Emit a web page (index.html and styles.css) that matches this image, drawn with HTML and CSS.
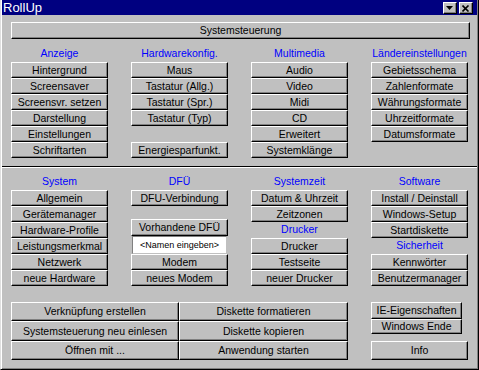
FILE: index.html
```html
<!DOCTYPE html>
<html lang="de">
<head>
  <meta charset="UTF-8" />
  <title>RollUp</title>
  <link rel="stylesheet" href="styles.css">
</head>
<body>

<div class="window">
  <div class="titlebar">
    <span class="title-text">RollUp</span>
    <button class="tbtn" title="Aufrollen">
      <svg width="8" height="5" viewBox="0 0 8 5"><path d="M0 0h7L3.5 4z" fill="#000"/></svg>
    </button>
    <button class="tbtn" title="Schließen">
      <svg width="8" height="7" viewBox="0 0 8 7"><path d="M0.5 0.5l6 6M6.5 0.5l-6 6" stroke="#000" stroke-width="1.6"/></svg>
    </button>
  </div>

  <div class="panel top">
    <button class="btn wide">Systemsteuerung</button>
    <div class="grid">
      <div class="col">
        <div class="label">Anzeige</div>
        <button class="btn">Hintergrund</button>
        <button class="btn">Screensaver</button>
        <button class="btn">Screensvr. setzen</button>
        <button class="btn">Darstellung</button>
        <button class="btn">Einstellungen</button>
        <button class="btn">Schriftarten</button>
      </div>
      <div class="col">
        <div class="label">Hardwarekonfig.</div>
        <button class="btn">Maus</button>
        <button class="btn">Tastatur (Allg.)</button>
        <button class="btn">Tastatur (Spr.)</button>
        <button class="btn">Tastatur (Typ)</button>
        <div class="spacer"></div>
        <button class="btn">Energiesparfunkt.</button>
      </div>
      <div class="col">
        <div class="label">Multimedia</div>
        <button class="btn">Audio</button>
        <button class="btn">Video</button>
        <button class="btn">Midi</button>
        <button class="btn">CD</button>
        <button class="btn">Erweitert</button>
        <button class="btn">Systemklänge</button>
      </div>
      <div class="col">
        <div class="label">Ländereinstellungen</div>
        <button class="btn">Gebietsschema</button>
        <button class="btn">Zahlenformate</button>
        <button class="btn">Währungsformate</button>
        <button class="btn">Uhrzeitformate</button>
        <button class="btn">Datumsformate</button>
      </div>
    </div>
  </div>

  <div class="sep"></div>

  <div class="panel middle">
    <div class="grid">
      <div class="col">
        <div class="label">System</div>
        <button class="btn">Allgemein</button>
        <button class="btn">Gerätemanager</button>
        <button class="btn">Hardware-Profile</button>
        <button class="btn">Leistungsmerkmal</button>
        <button class="btn">Netzwerk</button>
        <button class="btn">neue Hardware</button>
      </div>
      <div class="col">
        <div class="label">DFÜ</div>
        <button class="btn">DFU-Verbindung</button>
        <button class="btn tall dfu-list">Vorhandene DFÜ</button>
        <div class="field">&lt;Namen eingeben&gt;</div>
        <button class="btn">Modem</button>
        <button class="btn">neues Modem</button>
      </div>
      <div class="col">
        <div class="label">Systemzeit</div>
        <button class="btn">Datum &amp; Uhrzeit</button>
        <button class="btn">Zeitzonen</button>
        <div class="label">Drucker</div>
        <button class="btn">Drucker</button>
        <button class="btn">Testseite</button>
        <button class="btn">neuer Drucker</button>
      </div>
      <div class="col">
        <div class="label">Software</div>
        <button class="btn">Install / Deinstall</button>
        <button class="btn">Windows-Setup</button>
        <button class="btn">Startdiskette</button>
        <div class="label">Sicherheit</div>
        <button class="btn">Kennwörter</button>
        <button class="btn">Benutzermanager</button>
      </div>
    </div>
  </div>

  <div class="panel bottom">
    <div class="pair">
      <button class="btn row-a">Verknüpfung erstellen</button>
      <button class="btn row-a">Diskette formatieren</button>
      <button class="btn row-b">Systemsteuerung neu einlesen</button>
      <button class="btn row-b">Diskette kopieren</button>
      <button class="btn row-a">Öffnen mit ...</button>
      <button class="btn row-a">Anwendung starten</button>
    </div>
    <div class="side">
      <button class="btn tall narrow">IE-Eigenschaften</button>
      <button class="btn short narrow">Windows Ende</button>
      <button class="btn row-a info">Info</button>
    </div>
  </div>
</div>

</body>
</html>
```

FILE: styles.css
```css
body {
  margin: 0;
  font-family: "Liberation Sans", Arial, sans-serif;
  font-size: 10.5px;
  background: #c0c0c0;
}

.window {
  width: 479px; height: 370px; box-sizing: border-box;
  background: #c0c0c0;
  border-left: 1px solid #dfdfdf;
  border-right: 1px solid #000;
  border-bottom: 1px solid #000;
  box-shadow: inset 1px 0 #fff, inset -1px -1px #808080;
  padding: 0 1px 2px 1px;
}

/* title bar */
.titlebar {
  height: 15px;
  background: #000080;
  color: #fff;
  display: flex;
  align-items: flex-start;
  padding-left: 1px;
}
.title-text { flex: 1; font-size: 13px; line-height: 15px; }
.tbtn {
  width: 14px; height: 12px; margin-top: 2px; padding: 0;
  box-sizing: border-box;
  background: #c0c0c0;
  border: 1px solid; border-color: #fff #000 #000 #fff;
  box-shadow: inset -1px -1px #808080;
  display: flex; align-items: center; justify-content: center;
}
.tbtn + .tbtn { margin-left: 2px; margin-right: 4px; }

/* buttons */
.btn {
  display: block; width: 100%; height: 16px;
  box-sizing: border-box; margin: 0; padding: 0;
  background: #c0c0c0; color: #000;
  border: 1px solid; border-color: #fff #000 #000 #fff;
  box-shadow: inset -1px -1px #808080;
  font: inherit; line-height: 14px;
  text-align: center; white-space: nowrap;
}
.wide { height: 17px; line-height: 15px; }
.tall { height: 17px; line-height: 15px; }
.short { height: 15px; line-height: 13px; }
.row-a { height: 19px; line-height: 17px; }
.row-b { height: 20px; line-height: 18px; }

/* layout */
.panel { padding: 0 7px 0 9px; }
.top { padding-top: 7px; }
.middle { padding-top: 6px; }
.bottom { padding-top: 16px; display: flex; }

.grid {
  display: grid;
  grid-template-columns: repeat(4, 97px);
  column-gap: 23px;
}
.top .grid { margin-top: 7px; }
.col { display: flex; flex-direction: column; }

.label {
  height: 16px; line-height: 14px;
  color: #0000ff; text-align: center;
  white-space: nowrap;
}
.spacer { height: 16px; }

.sep {
  margin-top: 8px;
  border-top: 1px solid #000;
  border-bottom: 1px solid #fff;
}

.dfu-list { margin-top: 13px; }
.field {
  height: 18px; box-sizing: border-box; margin: 0 1px;
  background: #fff;
  border: 1px solid; border-color: #808080 #c0c0c0 #c0c0c0 #808080;
  font-size: 9px; line-height: 16px; text-align: center;
}

.pair {
  display: grid;
  grid-template-columns: 168px 169px;
}
.side {
  width: 97px; margin-left: 23px;
  display: flex; flex-direction: column;
}
.narrow { width: 91px; }
.info { margin-top: auto; }
```
